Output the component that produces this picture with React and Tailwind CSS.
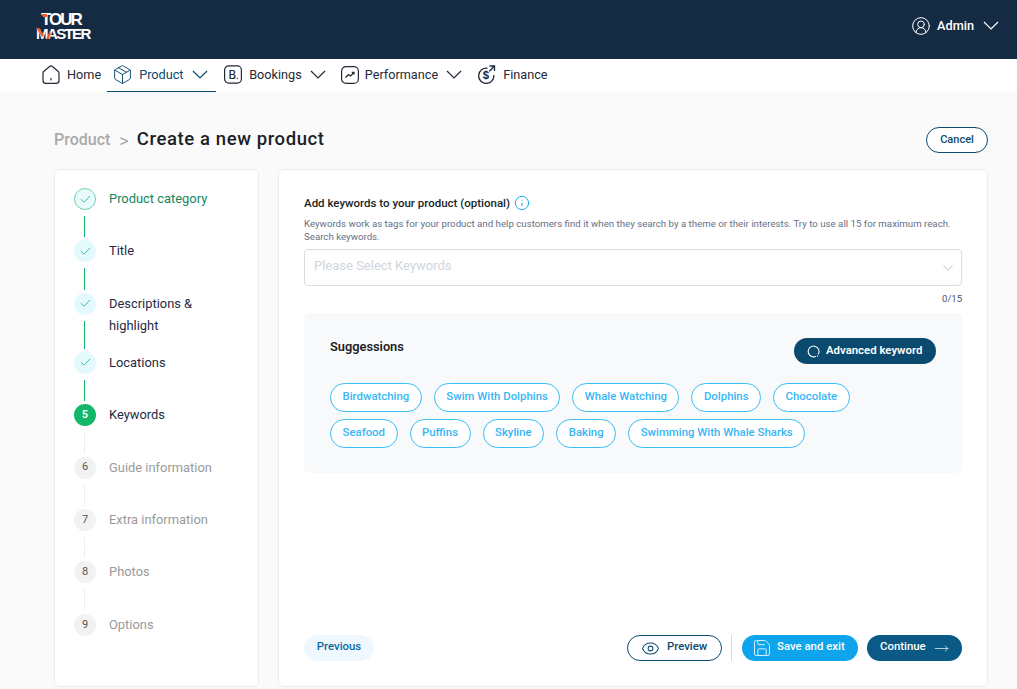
import { Check, CircleUserRound, Eye, Info, MoveRight, Package, Save } from 'lucide-react';

const Chevron = ({ className }) => (
  <svg width="16" height="9" viewBox="0 0 16 9" fill="none" stroke="currentColor" strokeWidth="1.2" className={className}>
    <path d="M1 1l7 7 7-7" />
  </svg>
);

const HomeIcon = () => (
  <svg width="18" height="19" viewBox="0 0 18 19" fill="none" stroke="#1f2937" strokeWidth="1.2">
    <path d="M1 8.2c0-.8.4-1.500 1-2L7.600 1.500c.8-.7 2-.7 2.800 0L16 6.200c.6.500 1 1.200 1 2V15.500c0 1.600-1.300 2.900-2.900 2.900H3.900C2.300 18.400 1 17.100 1 15.500z" />
    <path d="M9 13.500v1.500" strokeLinecap="round" />
  </svg>
);

const BookingIcon = () => (
  <svg width="18" height="19" viewBox="0 0 18 19" fill="none">
    <rect x=".6" y=".9" width="16.800" height="17.200" rx="4" stroke="#1f2937" strokeWidth="1.2" />
    <text x="4.500" y="14" fontSize="11.500" fontWeight="500" fontFamily="Inter, sans-serif" fill="#1f2937">B</text>
    <circle cx="13.300" cy="13.500" r=".7" fill="#1f2937" />
  </svg>
);

const PerformanceIcon = () => (
  <svg width="18" height="18" viewBox="0 0 18 18" fill="none" stroke="#1f2937" strokeWidth="1.2">
    <rect x=".6" y=".6" width="16.800" height="16.800" rx="4.500" />
    <path d="M4.500 11.500l3-3 2 1.500 3.500-3.500M10.800 6.300H13v2.200" strokeWidth="1.300" />
  </svg>
);

const FinanceIcon = () => (
  <svg width="19" height="19" viewBox="0 0 19 19" fill="none">
    <path d="M10.500 3.300A7.600 7.600 0 1 0 16.800 10" stroke="#1f2937" strokeWidth="1.300" />
    <path d="M12.500 1h5v5M17.300 1.200l-5 5" stroke="#1f2937" strokeWidth="1.300" />
    <text x="5.500" y="14" fontSize="10.500" fontWeight="700" fontFamily="Inter, sans-serif" fill="#1f2937">$</text>
  </svg>
);

const Logo = () => (
  <div className="relative w-[56px] h-[27px] text-white font-black font-['Liberation_Sans',sans-serif]">
    <div className="ml-[5px] text-[17px] leading-[14px] h-[14px] tracking-[-2px]">TOUR</div>
    <div className="text-[15px] leading-[13px] h-[13px] tracking-[-1.600px]">MASTER</div>
    <svg width="56" height="27" viewBox="0 0 56 27" className="absolute left-0 top-0">
      <path d="M5 1h6v3H7zM0 15h3l5 7-2 2zM10 26l4-8 1 3-2 5z" fill="#f0612a" />
    </svg>
  </div>
);

const steps = [
  { n: 1, label: 'Product category', state: 'first' },
  { n: 2, label: 'Title', state: 'done' },
  { n: 3, label: 'Descriptions & highlight', state: 'done' },
  { n: 4, label: 'Locations', state: 'done' },
  { n: 5, label: 'Keywords', state: 'current' },
  { n: 6, label: 'Guide information', state: 'todo' },
  { n: 7, label: 'Extra information', state: 'todo' },
  { n: 8, label: 'Photos', state: 'todo' },
  { n: 9, label: 'Options', state: 'todo' },
];

const StepCircle = ({ step }) => {
  if (step.state === 'first') {
    return (
      <div className="w-[22px] h-[22px] rounded-full border border-[#6fd3a8] bg-[#e8fafd] flex items-center justify-center">
        <Check size={13} strokeWidth={1.500} className="text-[#12b76a]" />
      </div>
    );
  }
  if (step.state === 'done') {
    return (
      <div className="w-[22px] h-[22px] rounded-full bg-[#e3f9fe] flex items-center justify-center">
        <Check size={13} strokeWidth={1.500} className="text-[#12b76a]" />
      </div>
    );
  }
  if (step.state === 'current') {
    return <div className="w-[22px] h-[22px] rounded-full bg-[#12b76a] text-white text-[11px] font-semibold flex items-center justify-center">5</div>;
  }
  return <div className="w-[22px] h-[22px] rounded-full bg-[#f2f2f2] text-[#555] text-[11px] flex items-center justify-center">{step.n}</div>;
};

const Stepper = () => (
  <aside className="w-[205px] h-[518px] shrink-0 bg-white border border-[#eaecf0] rounded-[6px] pt-[18px] pl-[19px] pr-[10px]">
    {steps.map((step, i) => {
      const textColor = step.state === 'first' ? 'text-[#14865c]' : step.state === 'todo' ? 'text-[#9a9a9a]' : 'text-[#1f2a44]';
      const lineColor = step.n < 5 ? 'bg-[#12b76a]' : 'bg-[#eeeeee]';
      return (
        <div key={step.n} className="flex min-h-[52.420px]">
          <div className="w-[22px] shrink-0 flex flex-col">
            <StepCircle step={step} />
            {i < steps.length - 1 && <div className={`w-px flex-1 ml-[10px] mt-[6px] mb-[3px] ${lineColor}`} />}
          </div>
          <div className={`ml-[13px] w-[105px] text-[12.900px] leading-[22px] pb-[15px] ${textColor}`}>{step.label}</div>
        </div>
      );
    })}
  </aside>
);

const row1 = ['Birdwatching', 'Swim With Dolphins', 'Whale Watching', 'Dolphins', 'Chocolate'];
const row2 = ['Seafood', 'Puffins', 'Skyline', 'Baking', 'Swimming With Whale Sharks'];

const Chip = ({ text }) => (
  <span className="h-[29px] px-[11.500px] pb-[1px] flex items-center rounded-full bg-white border border-[#38bdf8] text-[#38b6f5] text-[11.400px] font-medium whitespace-nowrap">
    {text}
  </span>
);

const App = () => {
  return (
    <div className="h-[689px] overflow-hidden bg-[#fafafa] font-['Roboto',sans-serif]">
      <header className="h-[59px] bg-[#152b43] flex items-center justify-between pl-[36px] pr-[18px] pb-[6px]">
        <Logo />
        <div className="flex items-center text-white text-[12.700px] font-medium pb-[2px]">
          <CircleUserRound size={20} strokeWidth={1.200} />
          <span className="ml-[6px]">Admin</span>
          <Chevron className="ml-[9px]" />
        </div>
      </header>

      <nav className="h-[33px] bg-white flex pl-[42px] text-[12.700px] text-[#1f2937]">
        <a className="flex items-center h-[32px] gap-[7px] pb-[1px]"><HomeIcon />Home</a>
        <a className="ml-[6px] w-[109px] h-[33px] pl-[5px] pb-[1px] flex items-center gap-[6px] border-b border-[#0b4a6f] text-[#0b4a6f]">
          <Package size={21} strokeWidth={1.100} className="shrink-0" />
          <span>Product</span>
          <Chevron className="ml-[2px]" />
        </a>
        <a className="ml-[8px] flex items-center h-[32px] gap-[7px] pb-[1px]"><BookingIcon />Bookings<Chevron className="ml-[1px]" /></a>
        <a className="ml-[15px] flex items-center h-[32px] gap-[6px] pb-[1px]"><PerformanceIcon />Performance<Chevron className="ml-[2px]" /></a>
        <a className="ml-[15px] flex items-center h-[32px] gap-[7px] pb-[1px]"><FinanceIcon />Finance</a>
      </nav>

      <main className="pl-[54px] pr-[29px]">
        <div className="h-[77px] pt-[19px] flex items-center justify-between">
          <div className="flex items-center">
            <span className="text-[16px] text-[#a9a9a9] font-medium">Product</span>
            <span className="ml-[9px] text-[18px] text-[#a9a9a9]">&gt;</span>
            <span className="ml-[8px] text-[18.500px] tracking-[0.600px] text-[#1b1f27] font-medium">Create a new product</span>
          </div>
          <button className="w-[62px] h-[26px] rounded-full border border-[#0b4a6f] bg-white text-[#0b4a6f] text-[11px] font-medium">Cancel</button>
        </div>

        <div className="flex gap-[19px]">
          <Stepper />

          <section className="flex-1 h-[518px] bg-white border border-[#eaecf0] rounded-[6px] px-[25px] pt-[25px] pb-[25px] flex flex-col">
            <div className="flex items-center text-[11.500px] font-medium text-[#1b1f27] leading-[16px]">
              Add keywords to your product (optional)
              <Info size={16} strokeWidth={1.500} className="ml-[4px] text-[#1ba7ec]" />
            </div>
            <p className="mt-[6px] text-[9.700px] leading-[13px] text-[#667085] w-[655px]">
              Keywords work as tags for your product and help customers find it when they search by a theme or their interests. Try to use all 15 for maximum reach. Search keywords.
            </p>
            <div className="mt-[6px] h-[37px] border border-[#dddddd] rounded-[4px] flex items-center justify-between pl-[9px] pr-[8px] text-[13px] text-[#d0d5dd]">
              <span className="pb-[3px]">Please Select Keywords</span>
              <svg width="10" height="6" viewBox="0 0 10 6" fill="none" stroke="#c4c4c4" strokeWidth="1">
                <path d="M.5.5L5 5.500 9.500.5" />
              </svg>
            </div>
            <div className="mt-[6px] text-right text-[9.500px] leading-[13px] text-[#475467]">0/15</div>

            <div className="mt-[8px] h-[160px] rounded-[6px] bg-[#f8f9fb] px-[26px] pt-[25px]">
              <div className="flex items-start justify-between h-[26px]">
                <span className="text-[12.800px] leading-[18px] font-semibold text-[#1b1f27]">Suggessions</span>
                <button className="w-[142px] h-[26px] rounded-full bg-[#0b4a6f] text-white text-[11.400px] font-semibold flex items-center pl-[13px] gap-[6px]">
                  <svg width="13" height="13" viewBox="0 0 13 13" fill="none" stroke="white" strokeWidth="1.100">
                    <path d="M11.200 9.300A5.400 5.400 0 1 0 9 11.300" />
                    <circle cx="10.700" cy="11" r=".4" fill="white" strokeWidth=".5" />
                  </svg>
                  Advanced keyword
                </button>
              </div>
              <div className="mt-[19px] flex gap-[12px]">
                {row1.map((t) => <Chip key={t} text={t} />)}
              </div>
              <div className="mt-[7px] flex gap-[12px]">
                {row2.map((t) => <Chip key={t} text={t} />)}
              </div>
            </div>

            <div className="mt-auto flex items-center justify-between">
              <button className="w-[70px] h-[26px] pb-[2px] rounded-full bg-[#eff8ff] text-[#0b6aa2] text-[11.400px] font-medium">Previous</button>
              <div className="flex items-center">
                <button className="w-[95px] h-[26px] pb-[2px] rounded-full border border-[#0b4a6f] bg-white text-[#0b4a6f] text-[11.400px] font-medium flex items-center pl-[13px] gap-[7px]">
                  <Eye size={19} strokeWidth={1.300} className="mt-[2px]" />
                  Preview
                </button>
                <div className="ml-[9px] mr-[10px] w-px h-[26px] bg-[#d9d9d9]" />
                <button className="w-[116px] h-[26px] pb-[2px] rounded-full bg-[#0ea5ec] text-white text-[11.400px] font-medium flex items-center pl-[10px] gap-[5px]">
                  <Save size={20} strokeWidth={1.200} className="text-[#d7f0fc] mt-[2px]" />
                  Save and exit
                </button>
                <button className="ml-[9px] w-[95px] h-[26px] pb-[2px] rounded-full bg-[#0b5a85] text-white text-[11.400px] font-medium flex items-center pl-[13px] gap-[8px]">
                  Continue
                  <MoveRight size={15} strokeWidth={1.100} className="mt-[2px]" />
                </button>
              </div>
            </div>
          </section>
        </div>
      </main>
    </div>
  );
};

export default App;
